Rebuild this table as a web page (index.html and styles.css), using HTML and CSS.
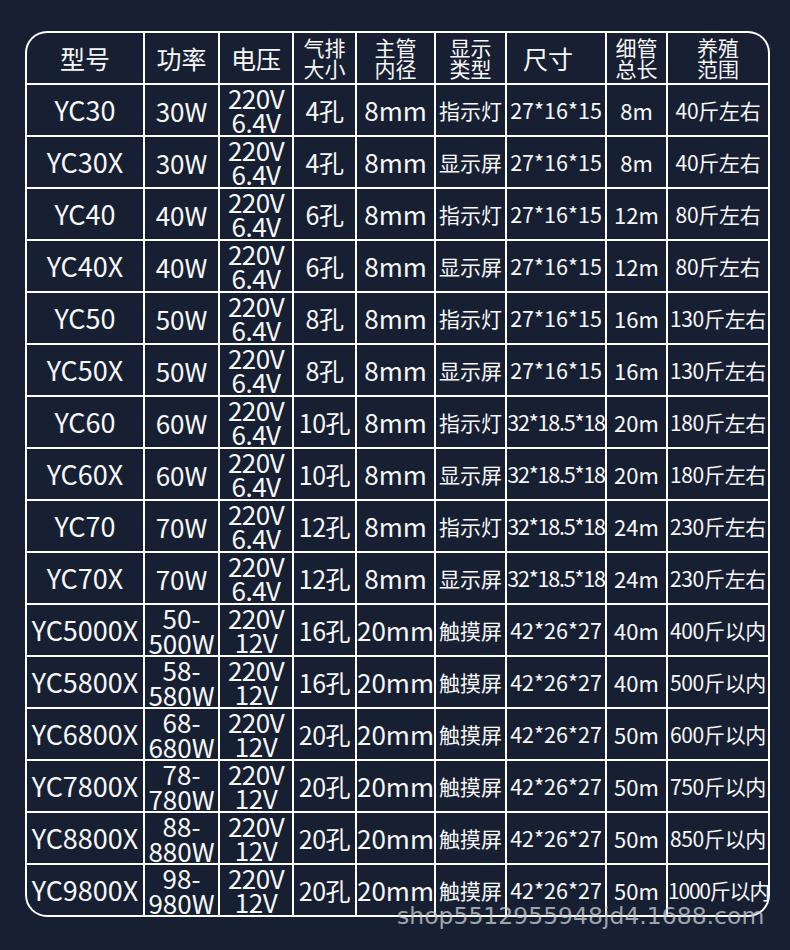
FILE: index.html
```html
<!DOCTYPE html>
<html lang="zh-CN">
<head>
  <meta charset="UTF-8">
  <meta name="viewport" content="width=device-width, initial-scale=1.0">
  <title>增氧机参数表</title>
  <link rel="stylesheet" href="styles.css">
</head>
<body>
  <div class="table-wrap">
    <table class="spec">
      <colgroup>
        <col style="width:116px">
        <col style="width:73px">
        <col style="width:72px">
        <col style="width:61px">
        <col style="width:77px">
        <col style="width:69px">
        <col style="width:98px">
        <col style="width:59px">
        <col style="width:100px">
      </colgroup>
      <thead>
        <tr>
          <th>型号</th>
          <th>功率</th>
          <th>电压</th>
          <th class="two">气排<br>大小</th>
          <th class="two">主管<br>内径</th>
          <th class="two">显示<br>类型</th>
          <th class="size-head">尺寸</th>
          <th class="two">细管<br>总长</th>
          <th class="two">养殖<br>范围</th>
        </tr>
      </thead>
      <tbody>
        <tr><td>YC30</td><td>30W</td><td>220V<br>6.4V</td><td>4孔</td><td>8mm</td><td>指示灯</td><td>27*16*15</td><td>8m</td><td>40斤左右</td></tr>
        <tr><td>YC30X</td><td>30W</td><td>220V<br>6.4V</td><td>4孔</td><td>8mm</td><td>显示屏</td><td>27*16*15</td><td>8m</td><td>40斤左右</td></tr>
        <tr><td>YC40</td><td>40W</td><td>220V<br>6.4V</td><td>6孔</td><td>8mm</td><td>指示灯</td><td>27*16*15</td><td>12m</td><td>80斤左右</td></tr>
        <tr><td>YC40X</td><td>40W</td><td>220V<br>6.4V</td><td>6孔</td><td>8mm</td><td>显示屏</td><td>27*16*15</td><td>12m</td><td>80斤左右</td></tr>
        <tr><td>YC50</td><td>50W</td><td>220V<br>6.4V</td><td>8孔</td><td>8mm</td><td>指示灯</td><td>27*16*15</td><td>16m</td><td>130斤左右</td></tr>
        <tr><td>YC50X</td><td>50W</td><td>220V<br>6.4V</td><td>8孔</td><td>8mm</td><td>显示屏</td><td>27*16*15</td><td>16m</td><td>130斤左右</td></tr>
        <tr><td>YC60</td><td>60W</td><td>220V<br>6.4V</td><td>10孔</td><td>8mm</td><td>指示灯</td><td class="tight">32*18.5*18</td><td>20m</td><td>180斤左右</td></tr>
        <tr><td>YC60X</td><td>60W</td><td>220V<br>6.4V</td><td>10孔</td><td>8mm</td><td>显示屏</td><td class="tight">32*18.5*18</td><td>20m</td><td>180斤左右</td></tr>
        <tr><td>YC70</td><td>70W</td><td>220V<br>6.4V</td><td>12孔</td><td>8mm</td><td>指示灯</td><td class="tight">32*18.5*18</td><td>24m</td><td>230斤左右</td></tr>
        <tr><td>YC70X</td><td>70W</td><td>220V<br>6.4V</td><td>12孔</td><td>8mm</td><td>显示屏</td><td class="tight">32*18.5*18</td><td>24m</td><td>230斤左右</td></tr>
        <tr><td>YC5000X</td><td>50-<br>500W</td><td>220V<br>12V</td><td>16孔</td><td>20mm</td><td>触摸屏</td><td>42*26*27</td><td>40m</td><td>400斤以内</td></tr>
        <tr><td>YC5800X</td><td>58-<br>580W</td><td>220V<br>12V</td><td>16孔</td><td>20mm</td><td>触摸屏</td><td>42*26*27</td><td>40m</td><td>500斤以内</td></tr>
        <tr><td>YC6800X</td><td>68-<br>680W</td><td>220V<br>12V</td><td>20孔</td><td>20mm</td><td>触摸屏</td><td>42*26*27</td><td>50m</td><td>600斤以内</td></tr>
        <tr><td>YC7800X</td><td>78-<br>780W</td><td>220V<br>12V</td><td>20孔</td><td>20mm</td><td>触摸屏</td><td>42*26*27</td><td>50m</td><td>750斤以内</td></tr>
        <tr><td>YC8800X</td><td>88-<br>880W</td><td>220V<br>12V</td><td>20孔</td><td>20mm</td><td>触摸屏</td><td>42*26*27</td><td>50m</td><td>850斤以内</td></tr>
        <tr><td>YC9800X</td><td>98-<br>980W</td><td>220V<br>12V</td><td>20孔</td><td>20mm</td><td>触摸屏</td><td>42*26*27</td><td>50m</td><td class="tight">1000斤以内</td></tr>
      </tbody>
    </table>
  </div>

  <div class="watermark">shop5512955948jd4.1688.com</div>
</body>
</html>
```

FILE: styles.css
```css
:root {
  --navy: #172033;
  --line: #ffffff;
  --text: #f7f7f7;
}

* {
  margin: 0;
  padding: 0;
  box-sizing: border-box;
}

html, body {
  background: var(--navy);
}

body {
  width: 790px;
  height: 950px;
  overflow: hidden;
  font-family: "Noto Sans CJK SC", "Noto Sans", sans-serif;
  color: var(--text);
}

.table-wrap {
  width: 745px;
  margin: 31px 0 0 25px;
  background: var(--line);
  border-radius: 22px;
  overflow: hidden;
}

.spec {
  width: 745px;
  table-layout: fixed;
  border-collapse: separate;
  border-spacing: 2px;
}

.spec th,
.spec td {
  height: 50px;
  background: var(--navy);
  text-align: center;
  vertical-align: middle;
  font-weight: 400;
  white-space: nowrap;
}

/* rounded outer corners */
.spec thead th:first-child { border-top-left-radius: 20px; }
.spec thead th:last-child { border-top-right-radius: 20px; }
.spec tbody tr:last-child td:first-child { border-bottom-left-radius: 20px; }
.spec tbody tr:last-child td:last-child { border-bottom-right-radius: 20px; }

/* header */
.spec th {
  font-size: 25px;
  line-height: 28px;
}

.spec th.two {
  font-size: 21px;
  line-height: 21px;
}

.spec th.size-head {
  padding-right: 16px;
}

/* body columns */
.spec td {
  font-size: 21px;
  line-height: 24px;
}

.spec td:nth-child(1) { font-size: 27px; }
.spec td:nth-child(2) { font-size: 26px; line-height: 25px; }
.spec td:nth-child(3) { font-size: 26px; line-height: 24px; letter-spacing: -0.5px; }
.spec td:nth-child(4) { font-size: 25px; letter-spacing: -0.5px; }
.spec td:nth-child(5) { font-size: 26px; }
.spec td:nth-child(6) { font-size: 21px; }
.spec td:nth-child(7) { font-size: 21.5px; }
.spec td:nth-child(8) { font-size: 22px; }
.spec td:nth-child(9) { font-size: 21px; letter-spacing: -0.3px; }

.spec td.tight { letter-spacing: -1.2px; }

.watermark {
  position: absolute;
  left: 397px;
  top: 904px;
  font-family: "DejaVu Sans", sans-serif;
  font-size: 23.5px;
  line-height: 24px;
  color: rgba(196, 200, 206, 0.78);
  white-space: nowrap;
}
```
